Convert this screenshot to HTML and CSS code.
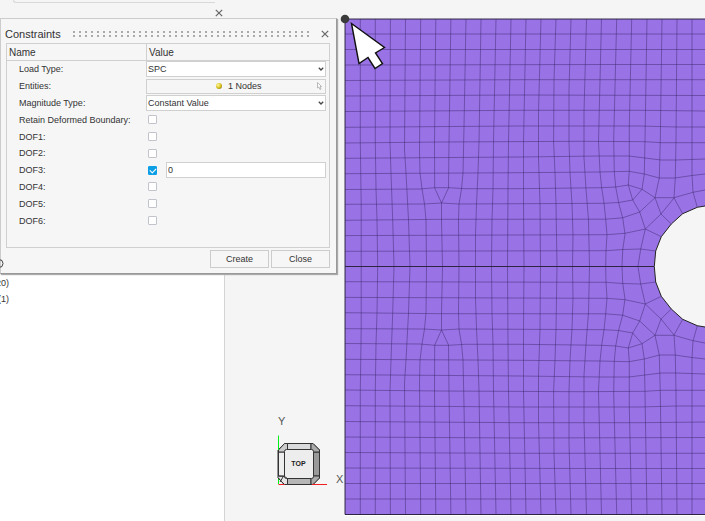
FILE: index.html
```html
<!DOCTYPE html>
<html lang="en">
<head>
<meta charset="utf-8">
<title>Constraints</title>
<meta name="viewport" content="width=device-width, initial-scale=1">
<link rel="stylesheet" href="styles.css">
</head>
<body>
<main class="app">
  <aside class="browser">
    <div class="browser-head">
      <div class="tab-edge"></div>
      <button class="icon-button browser-close" type="button" aria-label="Close panel">
        <svg width="8" height="8" viewBox="0 0 8 8"><path d="M.8.8 7.2 7.2M7.2.8.8 7.2"/></svg>
      </button>
    </div>
    <div class="browser-tree">
      <svg class="tree-search" width="4" height="11" viewBox="0 0 4 11"><circle cx="-1" cy="5.500" r="4"/></svg>
      <div class="tree-count">20)</div>
      <div class="tree-count">(1)</div>
    </div>
  </aside>

  <section class="viewport" aria-label="Model view">
    <div class="triad">
      <svg width="80" height="80" viewBox="270 413 80 80">
        <g class="cube">
          <path fill="#e4e4e4" d="M284.500 443.500h28.500l6.500 6.500v28l-6.500 6.500h-28.500l-6.500-6.500v-28z"/>
          <path fill="#d9dadb" d="M287.500 443.500h23.500v6.500h-23.500z"/>
          <path fill="#b6b6b6" d="M287.500 478.500h23.500v6h-23.500z"/>
          <path fill="#eee" d="M278.500 452h6v24h-6z"/>
          <path fill="#999" d="M313.500 452h6v24h-6z"/>
          <path fill="#aaa" d="M311 443.500h2l6.500 6.500v2h-6l-2.500-2.500zM313.500 476h6v2l-6.500 6.500h-2v-6z"/>
          <path fill="#ccc" d="M284.500 443.500h3v6l-3 2.500h-6v-2z"/>
          <rect fill="#ededed" x="284.500" y="449.500" width="29" height="29" rx="2"/>
          <path fill="none" d="M278.500 478l5.500 6.500M278.500 476l6 .500 3 2M283 477l-3 5"/>
        </g>
        <path stroke="#00ef14" d="M278.500 435.500V450M278.500 479V484"/>
        <path stroke="#f02020" d="M278.500 484.500h6M312 484.500h15"/>
        <text class="face" x="298.500" y="466" text-anchor="middle">TOP</text>
        <text class="axis" x="278" y="425">Y</text>
        <text class="axis" x="336" y="483">X</text>
      </svg>
    </div>
    <svg class="mesh" viewBox="341 0 364 521" preserveAspectRatio="xMinYMin slice">
      <rect x="344" y="18" width="372" height="498" fill="#fff"/>
      <rect x="345" y="19" width="370" height="495.500" fill="#9973e6"/>
      <defs>
        <g id="half">
          <!-- element columns -->
          <path d="M360.300 19V142L361.200 204V266.500M375.300 19V142L376 189 377 220 377.700 266.500M390.400 19 390 142 391 173 392.700 220 394 266.500M405.500 19 404.500 150 406 173 408.500 220 410 266.500M420.700 19 419.500 150 420 173 422 189 424.500 204 426 220 426.500 266.500M435.800 19 434.500 142 434.700 188 441.500 203V220L442.500 266.500M450.900 19 449 142 448.500 188 441.500 203M466 19 464 127 463 173 461.500 189 459 204 458.500 220 459 266.500M481 19 479 142 478 173 476.500 204 475.500 235V266.500M496 19 493.500 142 493 189 492 220 491.500 266.500M511 19 508.500 142 508 189 507.500 266.500M526 19 523.500 142V204L524 266.500M541 19 538.500 112V158L540 204 540.500 266.500M556 19 554 80 553.600 142 555 173 556 204 557 266.500M571 19 569 90V142L570 173 572 204 573 235 572.500 266.500M586.500 19 584 112V158L586 189 588.500 220 589.500 266.500M601.500 19 598.500 142 600 172 601.700 188 604 203 605.700 219 607 235 606 251 605.700 266.500M616.700 19 613.700 140 614.300 172 615.700 187 618.700 203 622.700 218 625 234 622.700 250 622 266.500M631.700 19 629.300 126V171L628.300 185 632.700 200 639.700 212 645.300 229 640.700 249 638 266.500M647 19 645 140 644.300 174 642 189.300 632.700 200M662 19 660.300 140 659.300 178 655 197.700M677 19 676 140 675.300 178 674 198M692 19V175L693 192 697.300 207.300"/>
          <!-- element rows -->
          <path d="M345 34H705M345 49.500H705M345 65 600 64.500H705M345 80.500 520 79.700H705M345 96 520 95 705 95.500M345 111.500 520 110.300H640L705 111M345 127.300 520 126H640L676 127H705M345 143 440 142 580 141.300 645 141.700 661 142.700H705M345 158.300 520 157 600 156H629L645 158 661 160H676L705 159M345 173.700 520 172.700 600 172 629 171.300 644.300 174 659.300 178H675L692 175.500 705 174M345 189.500 420 189 435 187.700H449L465 188.700H520L601.700 187.700 615.700 187 628.300 185 642 189.300 655 197.700H674L693 192.300 705 190M345 204.300 424 204 441.500 203 459 204 604 203.300 618.700 202.500 632.700 200M345 220.300 441 219.300 605.700 219.200 622.700 217.800 639.700 212 655 197.700 661 214M345 235.600 607 234.700 625 233.300 645.300 229 661 214 674 198 682.700 213.700M661 214 671.300 224M645.300 229 661.300 236.700M345 251.300 606 250.700 622.700 249.500 640.700 249 655.700 251"/>
        </g>
      </defs>
      <g class="edges">
        <use href="#half"/>
        <use href="#half" transform="matrix(1 0 0 -1 0 533)"/>
      </g>
      <path class="hole" d="M715 206H705L697.300 207.300 682.700 213.700 671.300 224 661.300 236.700 655.700 251 654.300 266.500 655.700 282 661.300 296.300 671.300 309 682.700 319.300 697.300 325.700 705 327H715"/>
      <path class="outline" d="M345 266.500H654M715 19H345V514.500H715"/>
      <circle cx="345" cy="19" r="4.300" fill="#3b3b3b"/>
      <path class="pointer" d="M351.500 23.500 384.500 47.500 375.500 53 382.500 63.500 375 68.500 368 57.500 359 63.500z"/>
    </svg>
  </section>
</main>

<form class="dialog" aria-labelledby="dialog-title">
  <header class="dialog-head">
    <h1 id="dialog-title">Constraints</h1>
    <div class="grip"></div>
    <button class="icon-button" type="button" aria-label="Close dialog">
      <svg width="8" height="8" viewBox="0 0 8 8"><path d="M.8.8 7.2 7.2M7.2.8.8 7.2"/></svg>
    </button>
  </header>

  <div class="properties">
    <div class="columns"><span>Name</span><span>Value</span></div>
    <div class="rows">
      <div class="row">
        <label for="load-type">Load Type:</label>
        <div class="field select">
          <select id="load-type"><option>SPC</option></select>
          <svg width="6" height="4" viewBox="0 0 6 4"><path d="M.8.8 3 3 5.2.8"/></svg>
        </div>
      </div>
      <div class="row">
        <label for="entities">Entities:</label>
        <button class="field entities" id="entities" type="button">
          <i class="node-dot"></i><span>1 Nodes</span>
          <svg width="5" height="8" viewBox="0 0 5 8"><path d="M.5.5V6L1.800 5 3 7.500 4 7 3 4.500H4.500z"/></svg>
        </button>
      </div>
      <div class="row">
        <label for="magnitude">Magnitude Type:</label>
        <div class="field select">
          <select id="magnitude"><option>Constant Value</option></select>
          <svg width="6" height="4" viewBox="0 0 6 4"><path d="M.8.8 3 3 5.2.8"/></svg>
        </div>
      </div>
      <div class="row"><label for="retain">Retain Deformed Boundary:</label><div class="field"><input type="checkbox" id="retain"></div></div>
      <div class="row"><label for="dof1">DOF1:</label><div class="field"><input type="checkbox" id="dof1"></div></div>
      <div class="row"><label for="dof2">DOF2:</label><div class="field"><input type="checkbox" id="dof2"></div></div>
      <div class="row"><label for="dof3">DOF3:</label><div class="field"><input type="checkbox" id="dof3" checked><input type="text" value="0" aria-label="DOF3 value"></div></div>
      <div class="row"><label for="dof4">DOF4:</label><div class="field"><input type="checkbox" id="dof4"></div></div>
      <div class="row"><label for="dof5">DOF5:</label><div class="field"><input type="checkbox" id="dof5"></div></div>
      <div class="row"><label for="dof6">DOF6:</label><div class="field"><input type="checkbox" id="dof6"></div></div>
    </div>
  </div>

  <footer class="actions">
    <button type="button">Create</button>
    <button type="button">Close</button>
  </footer>
</form>
</body>
</html>
```
FILE: styles.css
```css
* {
  box-sizing: border-box;
}

body {
  margin: 0;
  background: #f5f5f5;
  color: #333;
  font: 9px/12px "Liberation Sans", Arial, sans-serif;
  overflow: hidden;
}

button,
input,
select {
  margin: 0;
  color: inherit;
  font: inherit;
}

.app {
  display: grid;
  grid-template-columns: 225px 1fr;
  min-height: 100vh;
}

/* Model browser */
.browser {
  display: flex;
  flex-direction: column;
}

.browser-head {
  display: flex;
  align-items: flex-start;
  height: 18px;
}

.tab-edge {
  flex: 1;
  height: 3px;
  margin-left: 13px;
  border: solid #d8d8d8;
  border-width: 0 0 1px 1px;
  border-radius: 0 0 0 3px;
}

.icon-button {
  display: flex;
  padding: 0;
  border: 0;
  background: none;
}

.icon-button svg {
  fill: none;
  stroke: #666;
  stroke-width: 1.2;
}

.browser-close {
  margin: 9px 2px 0 0;
}

.browser-tree {
  flex: 1;
  padding-top: 240px;
  border-right: 1px solid #d4d4d4;
  background: #fff;
}

.tree-search {
  display: block;
  position: relative;
  z-index: 2;
  fill: none;
  stroke: #444;
}

.tree-count {
  display: flex;
  justify-content: flex-end;
  width: 9px;
  margin-top: 4px;
}

.tree-search + .tree-count {
  margin-top: 8px;
}

/* Model view */
.viewport {
  display: grid;
  grid-template-columns: 116px 1fr;
  height: 100vh;
  overflow: hidden;
}

.triad {
  display: flex;
  align-items: flex-end;
  padding: 0 0 28px 45px;
}

.triad svg {
  flex: none;
  position: relative;
  z-index: 1;
}

.cube {
  stroke: #333;
  stroke-width: 1;
}

.face {
  fill: #222;
  font-size: 7px;
  font-weight: bold;
}

.axis {
  fill: #555;
  font-size: 11px;
}

.mesh {
  width: 100%;
  height: 100%;
  overflow: visible;
}

.edges {
  fill: none;
  stroke: #40296f;
  stroke-opacity: 0.5;
}

.hole {
  fill: #f5f5f5;
  stroke: #222;
}

.outline {
  fill: none;
  stroke: #2c2440;
}

.pointer {
  fill: #fff;
  stroke: #111;
  stroke-width: 1.4;
}

/* Floating dialog */
.dialog {
  position: absolute;
  z-index: 1;
  top: 18px;
  left: 0;
  width: 337px;
  padding: 6px 6px 5px 5px;
  border: 1px solid #ccc;
  border-right-color: #999;
  border-bottom-color: #999;
  background: #f6f6f6;
  box-shadow: 1px 1px 1px #aaa;
}

.dialog-head {
  display: flex;
  align-items: center;
  height: 18px;
  padding-right: 1px;
}

.dialog-head h1 {
  margin: 0 0 0 -1px;
  font-size: 11px;
  font-weight: normal;
}

.grip {
  flex: 1;
  height: 8px;
  margin: 0 8px 0 10px;
  background: radial-gradient(circle, #aaa 0 1px, transparent 1px) 0 0 / 6px 4px;
}

.properties {
  height: 205px;
  border: 1px solid #d0d0d0;
}

.columns {
  display: grid;
  grid-template-columns: 139px 1fr;
  height: 17px;
  border-bottom: 1px solid #d0d0d0;
  font-size: 10px;
  line-height: 17px;
}

.columns span {
  padding-left: 2px;
}

.columns span + span {
  border-left: 1px solid #d0d0d0;
}

.rows {
  display: grid;
  grid-template-rows: repeat(10, 1fr);
  height: 168px;
  padding: 0 3px 0 12px;
}

.row {
  display: grid;
  grid-template-columns: 127px 1fr;
  align-items: center;
}

.field {
  display: flex;
  align-items: center;
  height: 16px;
  padding-left: 2px;
}

.select {
  position: relative;
  padding-left: 0;
}

.select select {
  appearance: none;
  width: 100%;
  height: 16px;
  padding: 0 1px;
  border: 1px solid #d0d0d0;
  border-radius: 0;
  background: #fff;
}

.select svg {
  position: absolute;
  right: 2px;
  fill: none;
  stroke: #444;
  stroke-width: 1.3;
}

.entities {
  width: 100%;
  height: 15px;
  padding: 0 3px 0 69px;
  border: 1px solid #d0d0d0;
  background: #f6f6f6;
}

.entities svg {
  margin-left: auto;
  fill: #fff;
  stroke: #aaa;
  stroke-width: 0.8;
}

.node-dot {
  width: 6px;
  height: 6px;
  margin-right: 6px;
  border-radius: 50%;
  background: radial-gradient(circle at 35% 35%, #fff9a0, #d8c020 50%, #6c5c08);
}

input[type="checkbox"] {
  appearance: none;
  display: grid;
  place-items: center;
  width: 9px;
  height: 9px;
  border: 1px solid #c2c4cc;
  border-radius: 1px;
  background: #fff;
}

input[type="checkbox"]:checked {
  border-color: #0c9fe6;
  background: #0c9fe6;
}

input[type="checkbox"]:checked::before {
  content: "";
  width: 5px;
  height: 3px;
  border: solid #fff;
  border-width: 0 0 1px 1px;
  transform: rotate(-45deg);
}

input[type="text"] {
  flex: 1;
  min-width: 0;
  height: 16px;
  margin-left: 9px;
  padding: 0 1px;
  border: 1px solid #d0d0d0;
  background: #fff;
}

.actions {
  display: flex;
  justify-content: flex-end;
  gap: 2px;
  padding-top: 2px;
}

.actions button {
  width: 59px;
  height: 18px;
  padding: 0;
  border: 1px solid #ccc;
  background: #f6f6f6;
}
```
